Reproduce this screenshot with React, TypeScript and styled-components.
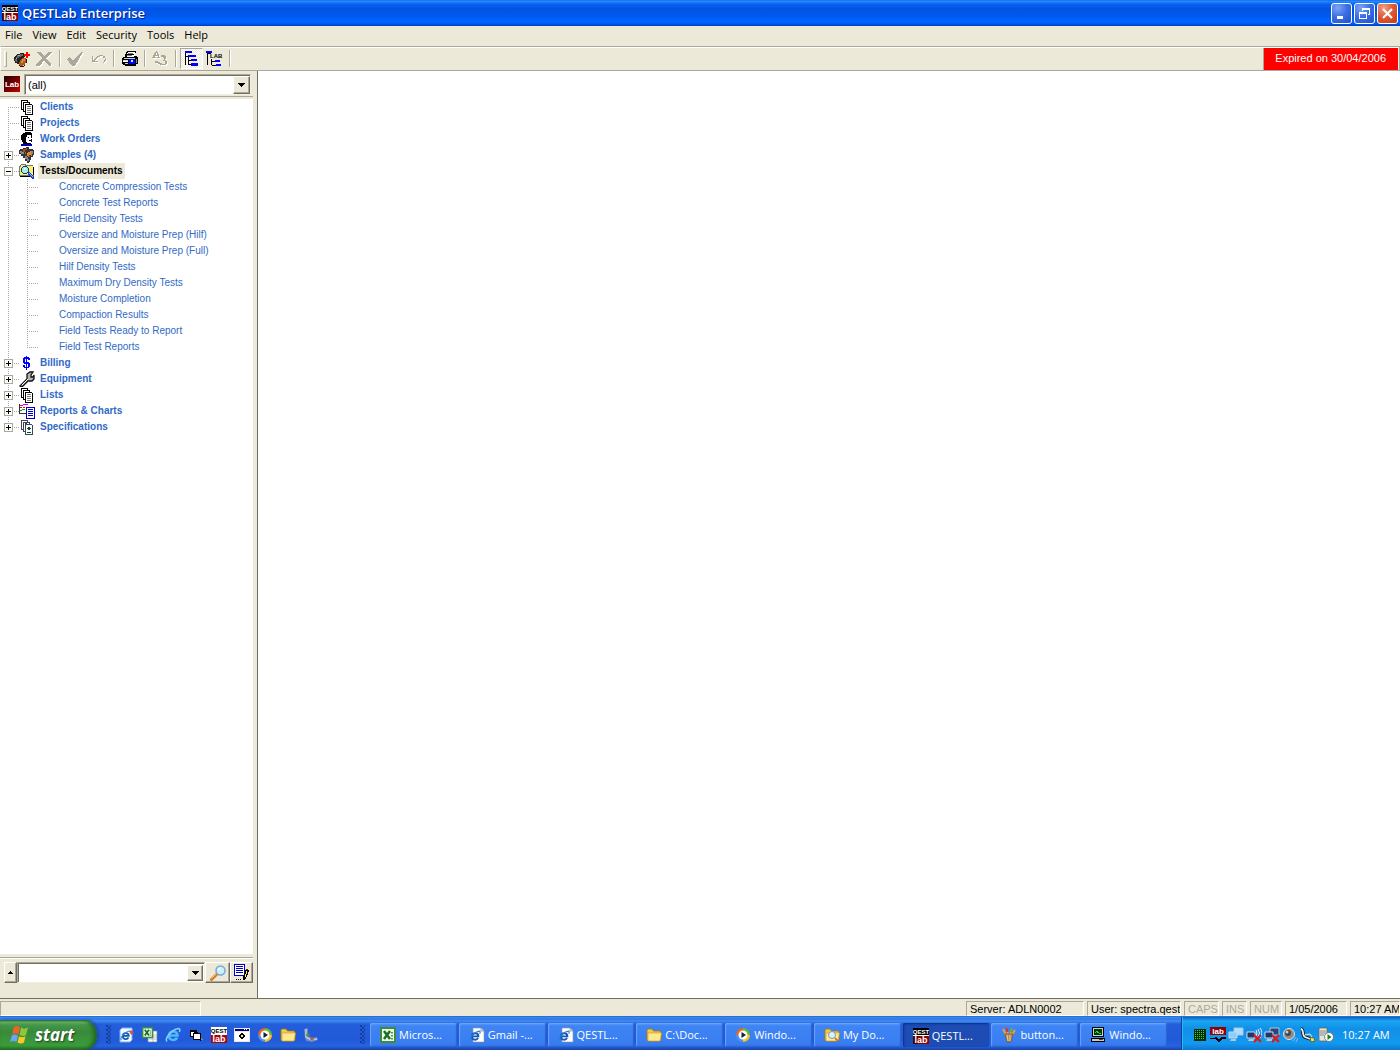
import React from 'react';
import styled, { createGlobalStyle, css } from 'styled-components';

const face = '#ece9d8';
const shade = '#aca899';
const dark = '#716f64';
const ui = '"Open Sans", "Noto Sans", sans-serif';
const arial = '"Liberation Sans", Arial, sans-serif';

const GlobalStyle = createGlobalStyle`
  * { box-sizing: border-box; }
  body { margin: 0; background: #fff; }
  button, input, select { font: inherit; color: inherit; margin: 0; padding: 0; border: 0; border-radius: 0; }
  svg { display: block; flex: none; }
`;

/* ---------- window frame ---------- */

const Desktop = styled.div`
  display: flex;
  flex-direction: column;
  height: 100vh;
  overflow: hidden;
  background: ${face};
  color: #000;
  font: 11px/16px ${ui};
`;

const TitleBar = styled.header`
  display: flex;
  align-items: center;
  gap: 4px;
  height: 26px;
  flex: none;
  padding: 0 2px;
  background: linear-gradient(#0a5fe0 0, #2a90ff 1px, #0a62f2 4px, #0054e3 9px, #0058ee 16px, #0066ff 21px, #0062f8 23px, #003dc2 26px);
`;

const Title = styled.h1`
  flex: 1;
  margin: 0;
  color: #fff;
  font: 600 13px/20px ${ui};
  text-shadow: 1px 1px 1px #0a1883;
`;

const WindowButtons = styled.div`
  display: flex;
  gap: 2px;
`;

const WindowButton = styled.button<{ $close?: boolean }>`
  display: grid;
  place-items: center;
  width: 21px;
  height: 21px;
  border: 1px solid #fff;
  border-radius: 3px;
  background: ${p => p.$close
    ? 'radial-gradient(circle at 30% 20%, #f0a088, #e05a34 45%, #c43a14)'
    : 'radial-gradient(circle at 30% 20%, #7ea6f4, #3d70e4 45%, #1f4fcf)'};
`;

const MenuBar = styled.nav`
  display: flex;
  align-items: center;
  gap: 10px;
  height: 20px;
  flex: none;
  padding: 0 5px 2px;
`;

const MenuItem = styled.button`
  background: none;
  line-height: 16px;
`;

const Toolbar = styled.div`
  display: flex;
  align-items: stretch;
  height: 25px;
  flex: none;
  border: 1px solid ${shade};
  border-left-color: #fff;
  box-shadow: inset 0 1px #fff;
`;

const Grip = styled.span`
  width: 3px;
  margin: 4px 3px 3px;
  border: 1px solid #fff;
  border-right-color: ${shade};
  border-bottom-color: ${shade};
`;

const ToolButton = styled.button<{ $pressed?: boolean }>`
  display: grid;
  place-items: center;
  width: 23px;
  margin: 1px 0;
  background: none;
  ${p => p.$pressed && css`
    background: repeating-conic-gradient(#fff 0 25%, ${face} 0 50%) 0 0 / 2px 2px;
    border: 1px solid #fff;
    border-top-color: ${shade};
    border-left-color: ${shade};
  `}
`;

const Separator = styled.span`
  width: 2px;
  margin: 3px;
  border-left: 1px solid ${shade};
  border-right: 1px solid #fff;
`;

const Spacer = styled.span`
  flex: 1;
`;

const Expired = styled.output`
  padding: 0 12px 0 11px;
  margin: 1px 1px 0 0;
  border-left: 1px solid ${shade};
  background: #f00;
  color: #fff;
  font: 11px/20px ${arial};
`;

/* ---------- navigator ---------- */

const Workspace = styled.div`
  display: flex;
  flex: 1;
  min-height: 0;
  border-bottom: 1px solid ${dark};
`;

const Sidebar = styled.aside`
  display: flex;
  flex-direction: column;
  flex: none;
  width: 258px;
  padding-right: 4px;
  border-right: 1px solid ${dark};
`;

const Document = styled.main`
  flex: 1;
  background: #fff;
`;

const FilterRow = styled.div`
  display: flex;
  align-items: center;
  gap: 4px;
  height: 26px;
  flex: none;
  padding: 1px 2px 0 4px;
  border-bottom: 1px solid ${shade};
`;

const sunken = css`
  border: 1px solid #f1efe2;
  border-top-color: ${shade};
  border-left-color: ${shade};
  box-shadow: inset 1px 1px ${dark};
  background: #fff;
`;

const raised = css`
  border: 1px solid ${dark};
  border-top-color: #fff;
  border-left-color: #fff;
  box-shadow: inset -1px -1px ${shade};
  background: ${face};
`;

const Combo = styled.div`
  ${sunken}
  position: relative;
  display: flex;
  flex: 1;
  min-width: 0;
  height: 21px;
  padding: 2px 1px 1px 2px;
  font: 11px/16px ${arial};
`;

const ComboSelect = styled.select`
  appearance: none;
  flex: 1;
  padding: 0 1px;
  background: #fff;
  outline: 0;
`;

const ComboInput = styled.input`
  flex: 1;
  min-width: 0;
  background: #fff;
  outline: 0;
`;

const DropArrow = styled.span`
  ${raised}
  position: absolute;
  top: 1px;
  right: 0;
  bottom: 0;
  width: 17px;
  display: grid;
  place-items: center;
  pointer-events: none;
`;

const DropButton = styled.button`
  ${raised}
  display: grid;
  place-items: center;
  width: 16px;
`;

const SmallButton = styled.button<{ $width: number }>`
  ${raised}
  display: grid;
  place-items: center;
  width: ${p => p.$width}px;
  height: 21px;
`;

const TreePane = styled.div`
  flex: 1;
  min-height: 0;
  overflow: hidden;
  margin-top: 2px;
  background: #fff;
`;

const SearchRow = styled.form`
  display: flex;
  align-items: center;
  height: 41px;
  flex: none;
  margin-top: 3px;
  padding: 4px 0 15px 4px;
  border-top: 1px solid ${shade};
  box-shadow: inset 0 1px #fff;
`;

const List = styled.ul`
  margin: 0;
  padding: 0;
  list-style: none;
`;

const dotsX = 'repeating-linear-gradient(90deg, #aca899 0 1px, transparent 1px 2px)';
const dotsY = 'repeating-linear-gradient(#aca899 0 1px, transparent 1px 2px)';

const TreeRow = styled.div`
  display: flex;
  align-items: center;
  height: 16px;
`;

const Branch = styled.span<{ $edge?: 'first' | 'last'; $arm?: boolean }>`
  display: flex;
  align-items: center;
  flex: none;
  width: 19px;
  height: 16px;
  padding: 1px 0 0 4px;
  background:
    ${p => p.$arm === false ? '' : `${dotsX} 8px 8px / 11px 1px no-repeat,`}
    ${dotsY} 8px ${p => p.$edge === 'first' ? '8px' : '0'} / 1px ${p => p.$edge ? '8px' : '16px'} no-repeat;
`;

const Expander = styled.button`
  display: grid;
  place-items: center;
  width: 9px;
  height: 9px;
  border: 1px solid ${shade};
  background: #fff;
`;

const IconCell = styled.span`
  flex: none;
  width: 19px;
  height: 16px;
`;

const NodeLink = styled.a<{ $active?: boolean; $leaf?: boolean }>`
  margin-left: ${p => p.$leaf ? 19 : 0}px;
  padding: 0 2px;
  color: ${p => p.$active ? '#000' : '#316ac5'};
  background: ${p => p.$active ? face : 'transparent'};
  font: ${p => p.$leaf ? 'normal' : 'bold'} 10px/16px ${arial};
  text-decoration: none;
  white-space: nowrap;
`;

/* ---------- status bar ---------- */

const StatusBar = styled.footer`
  display: flex;
  gap: 3px;
  height: 17px;
  flex: none;
  padding: 2px 0 0;
  font: 11px/14px ${arial};
`;

const StatusPanel = styled.span<{ $width: number; $off?: boolean }>`
  flex: none;
  width: ${p => p.$width}px;
  padding-left: 3px;
  overflow: hidden;
  white-space: nowrap;
  color: ${p => p.$off ? shade : '#000'};
  border: 1px solid #fff;
  border-top-color: ${shade};
  border-left-color: ${shade};
`;

/* ---------- taskbar ---------- */

const Taskbar = styled.div`
  display: flex;
  align-items: stretch;
  height: 34px;
  flex: none;
  color: #fff;
  background: linear-gradient(#1f50b8 0, #3c8cf0 1px, #2f78e8 3px, #3f8cf0 5px, #245edb 8px, #2259d8 24px, #2464e0 30px, #1941a5 34px);
`;

const StartButton = styled.button`
  display: flex;
  align-items: center;
  gap: 5px;
  width: 97px;
  margin-top: 4px;
  padding: 0 0 1px 10px;
  border-radius: 0 12px 12px 0 / 0 15px 15px 0;
  background: linear-gradient(#2d7d2d 0, #6fb86f 2px, #43964a 5px, #388a3a 12px, #3b983b 22px, #3a9a3a 26px, #256a28 30px);
  box-shadow: inset -3px 0 4px #1f6322, 2px 0 3px #1b4bb4;
  font: italic bold 17px/24px ${ui};
  text-shadow: 1px 1px 2px #1c451c;
`;

const TaskGrip = styled.span<{ $left: number }>`
  flex: none;
  width: 5px;
  margin: 9px 0 6px ${p => p.$left}px;
  background:
    linear-gradient(#153f9e 0 0) 0 0 / 0 0 no-repeat,
    repeating-conic-gradient(transparent 0 25%, #153f9e 0 50%) 0 0 / 4px 4px;
`;

const QuickLaunch = styled.div`
  display: flex;
  align-items: center;
  gap: 7px;
  margin-left: 8px;
  padding-top: 4px;
`;

const IconButton = styled.button`
  display: grid;
  width: 16px;
  height: 16px;
  background: none;
`;

const Tasks = styled.div`
  display: flex;
  flex: 1;
  gap: 2px;
  min-width: 0;
  margin: 7px 14px 3px 5px;
`;

const Task = styled.button<{ $active?: boolean }>`
  display: flex;
  align-items: center;
  gap: 3px;
  flex: 1 1 0;
  min-width: 0;
  padding: ${p => p.$active ? '2px 0 0 10px' : '0 0 0 10px'};
  border-radius: 2px;
  font: 11px/16px ${ui};
  white-space: nowrap;
  background: ${p => p.$active
    ? '#1c4cb4'
    : 'linear-gradient(#5c9cf8 0, #3f84f4 3px, #3a7ff2 18px, #3577ea 24px)'};
  box-shadow: ${p => p.$active ? 'inset 1px 1px 2px #0e2f80' : 'inset -1px -1px 1px #2c62d0, inset 1px 1px 1px #6aa4fa'};
`;

const Tray = styled.div`
  display: flex;
  align-items: center;
  gap: 2px;
  flex: none;
  width: 219px;
  margin-top: 1px;
  padding: 3px 0 0 10px;
  border-left: 1px solid #0b3f9f;
  box-shadow: inset 1px 0 #2bb8f8;
  background: linear-gradient(#0c62c0 0, #1da4f2 4px, #16a0ee 6px, #118fe8 12px, #129aee 26px, #0e78d4 33px);
`;

const Clock = styled.time`
  margin-left: 6px;
  white-space: nowrap;
`;

/* ---------- drawings ---------- */

const Svg = ({ w = 16, h = 16, soft, children }: { w?: number; h?: number; soft?: boolean; children: React.ReactNode }) => (
  <svg width={w} height={h} viewBox={`0 0 ${w} ${h}`} shapeRendering={soft ? 'auto' : 'crispEdges'} aria-hidden="true">{children}</svg>
);

const logoText = { fontFamily: 'Liberation Sans', fontWeight: 700 };

const QestLogo = () => (
  <Svg>
    <rect width="16" height="16" fill="#fff" />
    <rect y="8" width="16" height="8" fill="#8e0000" />
    <rect y="8" width="5" height="8" fill="#4a0000" />
    <rect width="16" height="7" fill="#000" />
    <text x="8" y="6" fontSize="6" textAnchor="middle" fill="#fff" {...logoText}>QEST</text>
    <text x="8" y="15" fontSize="9" textAnchor="middle" fill="#fff" {...logoText}>lab</text>
  </Svg>
);

const QestLogoWhite = () => (
  <Svg>
    <rect width="16" height="16" fill="#fff" />
    <rect y="8" width="16" height="8" fill="#b00008" />
    <text x="8" y="6" fontSize="6" textAnchor="middle" fill="#000" {...logoText}>QEST</text>
    <text x="8" y="15" fontSize="9" textAnchor="middle" fill="#fff" {...logoText}>lab</text>
  </Svg>
);

const LabBadge = () => (
  <Svg>
    <defs>
      <linearGradient id="labBadge" x1="0" y1="0" x2="1" y2="1">
        <stop offset="0" stopColor="#200000" /><stop offset="1" stopColor="#c80000" />
      </linearGradient>
    </defs>
    <rect width="16" height="16" fill="url(#labBadge)" />
    <text x="8" y="11" fontSize="8" textAnchor="middle" fill="#fff" {...logoText}>Lab</text>
  </Svg>
);

const Arrow = ({ up }: { up?: boolean }) => up
  ? <Svg w={5} h={3}><path d="M2 0h1v1h1v1h1v1H0V2h1V1h1z" /></Svg>
  : <Svg w={7} h={4}><path d="M0 0h7v1H6v1H5v1H4v1H3V3H2V2H1V1H0z" /></Svg>;

const AddSample = () => (
  <Svg w={17} h={16}>
    <path d="M3 4h1V3h3V2h4v1h1v3h-1v7H4v-1H2v-2H1V6h1V5h1z" fill="#222" />
    <path d="M4 4h3V3h3v2H8v1H6v1H3V6h1zM2 8h2v3H3v-1H2z" fill="#666" />
    <path d="M5 4h2v1H5zM3 7h1v1H3z" fill="#aaa" />
    <path d="M8 8h1V7h4v5h-1v2h-2v1H7v-1H6v-3h1v-2h1z" fill="#a85a1c" />
    <path d="M9 8h3v2h-2v2H8v-2h1z" fill="#e08a34" />
    <path d="M6 14h1v1h4v-1h1v1h-1v1H7v-1H6zM13 8h1v4h-1z" fill="#2a1204" />
    <path d="M13 1h2v2h2v2h-2v2h-2V5h-2V3h2z" fill="#f00" />
  </Svg>
);

const Cross = () => (
  <Svg w={17} h={16}>
    {['#fff', shade].map((c, i) => (
      <path key={c} d="M0 1h4l4 4 5-4h3l-6 6 5 6v2h-2L8 9l-4 6H0v-1l6-7z" fill={c} transform={i ? '' : 'translate(1 1)'} />
    ))}
  </Svg>
);

const Check = () => (
  <Svg w={17} h={16}>
    {['#fff', shade].map((c, i) => (
      <path key={c} d="M0 8l3-2 3 4 8-9h2L8 15H5z" fill={c} transform={i ? '' : 'translate(1 1)'} />
    ))}
  </Svg>
);

const Undo = () => (
  <Svg>
    {['#fff', shade].map((c, i) => (
      <g key={c} transform={i ? '' : 'translate(1 1)'}>
        <path d="M1 5h1v4h2v1h3v1H1z" fill={c} />
        <path d="M3 10V8h1V7h1V6h1V5h2V4h4v1h2v2h1v3h-1v1h-1v1h-1v-1h1V9h1V7h-2V5H9v1H7v1H6v1H5v1H4v1z" fill={c} />
      </g>
    ))}
  </Svg>
);

const Printer = () => (
  <Svg w={18} h={17}>
    <path d="M6 1h9v2h-1v3h2v1h1v7h-2v2H4v-1H2v-1H1V8h1V7h2V4h1V2h1z" />
    <path d="M7 2h7v1H7zM6 4h7v1H6v2h7V6h1V3H6z" fill="#fff" />
    <path d="M7 3h5v1H7zM6 5h5v1H6z" fill="#777" />
    <path d="M3 8h11v1H3zM2 10h5v1H2zM4 13h3v1H4z" fill="#d0d0d0" />
    <path d="M2 11h5v1H2z" fill="#fff" />
    <path d="M8 9h6v5H8z" fill="#00f" />
    <path d="M10 10h2v2h-2z" fill="#9ff" />
    <path d="M15 9h1v4h-1z" fill="#888" />
  </Svg>
);

const Spelling = () => (
  <Svg w={17} h={16}>
    {['#fff', shade].map((c, i) => (
      <g key={c} transform={i ? '' : 'translate(1 1)'} fill={c}>
        <path d="M4 0h1v1h1v2h1v3h1v1H5V6h1V5H3v1h1v1H0V6h1V4h1V2h1V1h1zM4 2v2h1V2z" fillRule="evenodd" />
        <path d="M9 4h4v1h1v3h-1v1h1v1h1v3h-1v1h-3v-1h2v-3h-2V9h1V7h-1V6H9zM3 10h3v1h2v1h2v1h2v1H8v-1H6v-1H3z" />
      </g>
    ))}
  </Svg>
);

const TreeIcon = ({ lab }: { lab?: boolean }) => (
  <Svg w={17} h={17}>
    {lab
      ? <>
          <path d="M0 1h6v2H0zM9 10h5v2H9zM10 14h5v2h-5z" fill="#00f" />
          <path d="M1 3h1v12H1zM2 3h3v1H2zM5 9h1v6H5zM6 11h3v1H6zM6 15h4v1H6z" />
          <text x="4" y="8" fontSize="6" {...logoText}>LAB</text>
        </>
      : <>
          <path d="M2 1h7v2H2zM5 5h8v2H5zM8 9h6v2H8zM8 13h7v3H8z" fill="#00f" />
          <path d="M2 3h1v12H2zM3 6h2v1H3zM5 7h1v8H5zM6 10h2v1H6zM6 14h2v1H6z" />
        </>}
  </Svg>
);

const Pages = ({ spec }: { spec?: boolean }) => {
  const ink = spec ? '#445' : '#000';
  return (
    <Svg>
      <path d="M2 1h7v10H2z" fill={ink} /><path d="M3 2h5v8H3z" fill="#fff" />
      <path d="M4 3h7v10H4z" fill={ink} /><path d="M5 4h5v8H5z" fill="#fff" />
      <path d="M6 5h7v1h1v10H6z" fill={ink} /><path d="M7 6h6v9H7z" fill="#fff" />
      {spec
        ? <path d="M9 8h2v1h1v1h-1v1H9v-1H8V9h1zM8 13h4v1H8zM4 5h1v3H4zM6 4h2v1H6z" fill="#06503c" />
        : <path d="M8 7h4v1H8zM8 9h4v1H8zM8 11h4v1H8zM8 13h4v1H8z" fill="#777" />}
    </Svg>
  );
};

const Person = () => (
  <Svg>
    <path d="M4 2h2V1h6v1h1v3h-1V4H8v2H7v5h1v2H5v-1H4v-1H3V9H2V4h1V3h1z" />
    <path d="M8 4h4v3h1v1h-1v3h-1v1H8v-1H7V6h1z" fill="#fff" />
    <path d="M9 6h1v1H9zM12 5h1v2h-1zM10 9h2v1h-2zM12 8h1v3h-1zM8 12h4v1H8z" />
    <path d="M2 13h2v-1h2v1h5v-1h1v1h1v2H2z" fill="#0000b0" />
  </Svg>
);

const Samples = () => (
  <Svg>
    <path d="M1 2h3V1h3V0h3v2h4v1h1v5h-1v2h-2v3h-1v2h-1v1H8v-2H6v-3H4V9H2V7H0V3h1z" fill="#333" />
    <path d="M1 4h2v1h2v2H2zM6 9h2v1h1v2H6zM12 4h2v3h-1v2h-1zM8 12h2v2H8z" fill="#888" />
    <path d="M4 2h3V1h1v2H6v2H4z" fill="#b04c10" />
    <path d="M9 5h2V4h1v4h-2v1H8V6h1z" fill="#f08820" />
    <path d="M6 5h1v2H6zM9 9h2v1H9z" fill="#a45a30" />
  </Svg>
);

const TestsFolder = () => (
  <Svg>
    <path d="M2 1h5v1h7v2h1v10H1v-1H0V3h1V2h1z" fill="#777" />
    <path d="M1 4h1V2h4v1h8v9H1z" fill="#f8f070" />
    <path d="M1 13h12v1H1zM14 4h1v8h-1z" fill="#000" />
    <path d="M4 3h4v1h1v1h1v4H9v1H8v1H4v-1H3V9H2V5h1V4h1z" fill="#236" />
    <path d="M4 4h4v1h1v4H8v1H4V9H3V5h1z" fill="#98f0f0" />
    <path d="M5 5h2v1H6v1H5z" fill="#fff" />
    <path d="M9 9h2v1h1v1h1v1h1v1h1v3h-2v-1h-1v-1h-1v-1h-1v-1H9z" fill="#1840d0" />
    <path d="M10 10h1v1h1v1h1v1h1v1h-1v-1h-1v-1h-1v-1h-1z" fill="#8cf" />
  </Svg>
);

const Dollar = () => (
  <Svg>
    <path d="M7 1h1v1h2v1h1v2H9V4H8v3h2v1h1v4h-1v1H8v2H7v-2H5v-1H4v-2h2v2h1V9H5V8H4V3h1V2h2zM6 4v3h1V4zM8 9v3h1V9z" fill="#00f" />
  </Svg>
);

const Wrench = () => (
  <Svg soft>
    <path d="M1 15l7-7V3l3-2h3l-2 3v2h2l1-2v4l-2 2H9l-6 6z" fill="#b4b4b4" stroke="#111" strokeWidth="1.300" />
    <path d="M3 14l6-6" stroke="#fff" />
  </Svg>
);

const Chart = () => (
  <Svg>
    <path d="M0 1h1v9h6v1H0z" fill="#333" />
    <path d="M1 2h3v1H1zM4 1h5v1H4z" fill="#d0d" /><path d="M1 4h2v1H1zM4 4h2v1H4zM7 4h2v1H7z" fill="#f00" /><path d="M1 7h2v1H1zM3 6h3v1H3z" fill="#0a0" />
    <path d="M7 4h9v12H7z" fill="#0000c8" /><path d="M8 5h7v10H8z" fill="#fff" />
    <path d="M9 6h5v1H9zM9 8h5v1H9zM9 10h5v1H9zM9 12h5v1H9z" fill="#0000c8" />
  </Svg>
);

const Magnifier = () => (
  <Svg soft>
    <path d="M1.500 14.500l5-5" stroke="#d87820" strokeWidth="3" strokeLinecap="round" />
    <path d="M1.500 13.500l4.500-4.500" stroke="#ffc060" />
    <circle cx="10.500" cy="5.500" r="4.500" fill="#c8f0ff" stroke="#7ca8d0" strokeWidth="1.500" />
    <path d="M8 5l2-2" stroke="#fff" strokeWidth="1.500" />
  </Svg>
);

const EditList = () => (
  <Svg w={17} h={17}>
    <path d="M1 0h11v12H1z" fill="#0000c8" /><path d="M2 1h9v10H2z" fill="#fff" />
    <path d="M3 2h7v1H3zM3 4h7v1H3zM3 6h7v1H3zM3 8h7v1H3z" fill="#0000c8" />
    <path d="M13 5h2v1h1v2h-1v3h-1v2h-1v2h-1v1h-2v-4h1V9h1V6h1zM3 15h1v1H3zM5 15h1v1H5zM7 15h1v1H7z" />
    <path d="M13 7h1v3h-1v3h-1v-3h1z" fill="#ff0" /><path d="M13 5h2v1h-2z" fill="#a00" />
  </Svg>
);

const WindowsFlag = () => (
  <svg width="20" height="20" viewBox="0 0 20 20" aria-hidden="true">
    <path d="M4 2c2-1.500 4-1.500 6 0L8.500 9.500c-2-1.500-4-1.500-6.500 0z" fill="#f0602c" />
    <path d="M11 2.500c2 1.500 4 1.500 7 0L16 10c-2 1.500-4 1.300-6.500 0z" fill="#8cc83c" />
    <path d="M1.800 10.500c2-1.500 4-1.500 6.200 0L6.500 17c-2-1.500-4-1.500-6.500 0z" fill="#6ca4f8" />
    <path d="M9 11.200c2 1.500 4 1.500 6.500 0L14 17.500c-2 1.500-4 1.300-6.500 0z" fill="#fcc828" />
  </svg>
);

const Ie = ({ page, shortcut }: { page?: boolean; shortcut?: boolean }) => {
  const inner = page || shortcut;
  return (
    <Svg soft>
      {page && <><path d="M4 1h8l3 3v11H4z" fill="#fff" stroke="#999" strokeWidth=".6" /><path d="M12 1v3h3" fill="#ddd" stroke="#777" strokeWidth=".6" /></>}
      {shortcut && <path d="M1 3l2-2h10v12l-2 2H1z" fill="#f4f9ff" stroke="#78b0ec" />}
      <g transform={page ? 'translate(0 3) scale(.75)' : shortcut ? 'translate(1 3) scale(.7)' : ''} fill="none">
        <path d="M4 8.500h8.500C12.500 3 4 3 4 8.500c0 5.500 6.500 5.500 8 2" stroke={inner ? '#1458b8' : '#50b8fc'} strokeWidth="2.500" />
        <path d="M2 14.500C-1 11 8 2 13.500 1.500c2 0 1.500 2 .8 3.500" stroke={inner ? '#2c80d8' : '#7cd0fc'} strokeWidth="1.500" />
      </g>
      {shortcut && <path d="M11 3l4 2.500L12 8z" fill="#e84c10" />}
    </Svg>
  );
};

const Excel = ({ sheet }: { sheet?: boolean }) => (
  <Svg soft>
    {sheet && <><path d="M6 4h9v11H6z" fill="#fff" stroke="#789" strokeWidth=".7" /><path d="M7 8h8M7 10h8M7 12h8M11 5v10" stroke="#9ab" strokeWidth=".7" /></>}
    <g transform={sheet ? 'scale(.7)' : ''}>
      <path d="M1 1h14v14H1z" fill="#f0f8ec" stroke="#3c8c40" strokeWidth="2" />
      <path d="M4 4l6 8M10 4l-6 8" stroke="#187020" strokeWidth="2.500" />
      <path d="M12 5v1.500M12 8v1.500M12 11v1.500" stroke="#4a9a50" strokeWidth="2" />
    </g>
  </Svg>
);

const Folder = ({ find }: { find?: boolean }) => (
  <Svg soft>
    <path d="M1 3l1-1h4l1.500 2H14l1 1v8l-1 1H2l-1-1z" fill="#f4c848" stroke="#a87810" strokeWidth=".8" />
    <path d="M2 6h13.500L14 14H2z" fill="#ffe890" stroke="#c89828" strokeWidth=".6" />
    {find && <><circle cx="8" cy="8" r="3.500" fill="#d8f2ff" stroke="#7c98b8" /><path d="M11 11l3 3" stroke="#c06018" strokeWidth="1.500" /></>}
  </Svg>
);

const Player = () => (
  <Svg soft>
    <path d="M8 8V1a7 7 0 0 0-7 7z" fill="#f06420" /><path d="M8 8V1a7 7 0 0 1 7 7z" fill="#68b838" />
    <path d="M8 8H1a7 7 0 0 0 7 7z" fill="#4c94f0" /><path d="M8 8h7a7 7 0 0 1-7 7z" fill="#fcc020" />
    <circle cx="8" cy="8" r="4.500" fill="#fff" /><path d="M6.500 5l4.500 3-4.500 3z" fill="#123" />
  </Svg>
);

const DesktopIcon = () => (
  <Svg>
    <path d="M2 3h7v2h1v1h3v8h-1v-1H5v-3H2z" /><path d="M3 5h3v1H5v3H3zM6 7h6v5H6z" fill="#fff" /><path d="M13 11h1v1h1v1h-2z" fill="#888" />
  </Svg>
);

const AppWindow = () => (
  <Svg>
    <path d="M0 1h16v14H0z" fill="#e8e8e8" /><path d="M1 2h14v2H1z" fill="#000080" /><path d="M10 2h1v1h-1zM12 2h1v1h-1z" fill="#fff" />
    <path d="M1 5h14v9H1z" fill="#fff" /><path d="M7 6h2v1h1v1h1v2h-1v1H9v1H7v-1H6v-1H5V8h1V7h1z" /><path d="M7 8h2v2H7z" fill="#ff0" />
  </Svg>
);

const Gadget = () => (
  <Svg soft>
    <path d="M1 2l4-1v8l4 2 5-1 1 3-6 2-6-1-1-3z" fill="#6c88c0" />
    <path d="M3 2v8l5 3 6-1" stroke="#b8c8e8" fill="none" strokeWidth="1.500" />
    <circle cx="5" cy="8" r="1.800" fill="#489048" /><circle cx="9" cy="12" r="1.800" fill="#a06850" />
  </Svg>
);

const Brushes = () => (
  <Svg soft>
    <path d="M5 8L2 2M7 8L6 1M9 8l2-7M11 8l3-5" strokeWidth="1.800" stroke="#f0a030" /><path d="M6.500 5L6 1" stroke="#e03020" strokeWidth="2" /><path d="M10 5l1-4" stroke="#50b050" strokeWidth="2" />
    <path d="M4 7h8l-2 8H6z" fill="#b48858" stroke="#6c4820" strokeWidth=".6" /><path d="M6 8l1 6M9 8v6" stroke="#e8d0a8" />
  </Svg>
);

const Terminal = () => (
  <Svg>
    <path d="M2 0h12v10H2zM1 11h14v4H1z" /><path d="M3 1h10v8H3z" fill="#d0d0d0" /><path d="M4 2h8v6H4z" fill="#003800" />
    <path d="M5 5h1V4h2v1h1v1h2v1H9V6H7V5H6v1H5z" fill="#20e840" /><path d="M2 12h12v2H2z" fill="#c8c8c8" /><path d="M9 12h4v1H9z" fill="#444" />
  </Svg>
);

const GreenGrid = () => (
  <Svg>
    <path d="M2 2h12v12H2z" fill="#062c06" />
    {[4, 6, 8, 10, 12].map(y => <path key={y} d={`M3 ${y - 1}h1v1H3zM5 ${y - 1}h1v1H5zM7 ${y - 1}h1v1H7zM9 ${y - 1}h1v1H9zM11 ${y - 1}h1v1h-1z`} fill="#28d838" />)}
  </Svg>
);

const LabPulse = () => (
  <Svg><path d="M0 0h16v8H0z" fill="#900008" /><text x="8" y="7" fontSize="8" textAnchor="middle" fill="#fff" {...logoText}>lab</text><path d="M0 11h4l2-1 3 3 2-3h5v2h-4l-2 3H8l-3-3H0z" /></Svg>
);

const Net = ({ waves, broken }: { waves?: boolean; broken?: boolean }) => (
  <Svg soft>
    {!waves && <path d="M6 1h9v7H6z" fill={broken ? '#284878' : '#a8e0ff'} stroke="#b0c4e0" />}
    <path d="M1 5h8v6H1z" fill={broken ? '#203868' : '#88d0ff'} stroke="#c8d8f0" /><path d="M3 12h5v2H2z" fill="#b8c4d8" />
    {waves && <path d="M10 3q2 3 0 6M12 2q3 4 0 8M14 1q4 5 0 10" stroke="#e8f4ff" fill="none" />}
    {broken && <path d="M8 8l7 7M15 8l-7 7" stroke="#e41818" strokeWidth="2.200" />}
  </Svg>
);

const Speaker = () => (
  <Svg soft><circle cx="7" cy="7" r="5.500" fill="#8c8c8c" stroke="#e0e0e0" /><circle cx="6" cy="6" r="3" fill="#444" /><circle cx="5" cy="5" r="1.500" fill="#ccc" /><path d="M11 14l3-4M14 15l2-4" stroke="#70b0ff" strokeWidth="1.200" /></Svg>
);

const Plug = () => (
  <Svg soft><path d="M1 2c3 0 1 7 4 8l5 2" stroke="#111" strokeWidth="3.500" fill="none" /><path d="M1 2c3 0 1 7 4 8l5 2" stroke="#eee" strokeWidth="1.800" fill="none" /><path d="M5 8l5-1 2 3" stroke="#eee" fill="none" /><path d="M10 10l4 1 1 3-4 1z" fill="#fce030" stroke="#333" strokeWidth=".6" /></Svg>
);

const Server = () => (
  <Svg soft><path d="M1 1h8v13H1z" fill="#e8e4d8" stroke="#666" strokeWidth=".8" /><path d="M2 4h6M2 6h6M2 8h4" stroke="#888" /><circle cx="11" cy="10" r="4.500" fill="#fff" stroke="#666" strokeWidth=".8" /><path d="M9.500 7l4 3-4 3z" fill="#108020" /></Svg>
);

/* ---------- data ---------- */

type Node = { label: string; icon: React.ReactNode; open?: boolean; leaf?: boolean; children?: string[] };

const nodes: Node[] = [
  { label: 'Clients', icon: <Pages />, leaf: true },
  { label: 'Projects', icon: <Pages />, leaf: true },
  { label: 'Work Orders', icon: <Person />, leaf: true },
  { label: 'Samples (4)', icon: <Samples /> },
  {
    label: 'Tests/Documents', icon: <TestsFolder />, open: true,
    children: [
      'Concrete Compression Tests', 'Concrete Test Reports', 'Field Density Tests',
      'Oversize and Moisture Prep (Hilf)', 'Oversize and Moisture Prep (Full)', 'Hilf Density Tests',
      'Maximum Dry Density Tests', 'Moisture Completion', 'Compaction Results',
      'Field Tests Ready to Report', 'Field Test Reports',
    ],
  },
  { label: 'Billing', icon: <Dollar /> },
  { label: 'Equipment', icon: <Wrench /> },
  { label: 'Lists', icon: <Pages /> },
  { label: 'Reports & Charts', icon: <Chart /> },
  { label: 'Specifications', icon: <Pages spec /> },
];

const quickLaunch: [string, React.ReactNode][] = [
  ['Outlook', <Ie shortcut />], ['Excel', <Excel sheet />], ['Internet Explorer', <Ie />],
  ['Show desktop', <DesktopIcon />], ['QESTLab', <QestLogoWhite />], ['Scheduler', <AppWindow />],
  ['Media Player', <Player />], ['Explorer', <Folder />], ['Utilities', <Gadget />],
];

const tasks: [string, React.ReactNode][] = [
  ['Micros...', <Excel />], ['Gmail -...', <Ie page />], ['QESTL...', <Ie page />], ['C:\\Doc...', <Folder />],
  ['Windo...', <Player />], ['My Do...', <Folder find />], ['QESTL...', <QestLogo />],
  ['button...', <Brushes />], ['Windo...', <Terminal />],
];

const TreeNode = ({ node, first, last }: { node: Node; first: boolean; last: boolean }) => (
  <li>
    <TreeRow>
      <Branch $edge={first ? 'first' : last ? 'last' : undefined}>
        {!node.leaf && (
          <Expander type="button" aria-label={`Toggle ${node.label}`}>
            <Svg w={5} h={5}><path d={node.open ? 'M0 2h5v1H0z' : 'M0 2h2V0h1v2h2v1H3v2H2V3H0z'} /></Svg>
          </Expander>
        )}
      </Branch>
      <IconCell>{node.icon}</IconCell>
      <NodeLink href="#" $active={node.open}>{node.label}</NodeLink>
    </TreeRow>
    {node.children && (
      <List>
        {node.children.map((label, i) => (
          <TreeRow as="li" key={label}>
            <Branch $arm={false} />
            <Branch $edge={i === node.children!.length - 1 ? 'last' : undefined} />
            <NodeLink href="#" $leaf>{label}</NodeLink>
          </TreeRow>
        ))}
      </List>
    )}
  </li>
);

export default function App() {
  return (
    <Desktop>
      <GlobalStyle />
      <TitleBar>
        <QestLogo />
        <Title>QESTLab Enterprise</Title>
        <WindowButtons>
          <WindowButton aria-label="Minimize"><Svg w={13} h={13}><path d="M2 9h6v3H2z" fill="#fff" /></Svg></WindowButton>
          <WindowButton aria-label="Restore">
            <Svg w={13} h={13}><path d="M4 1h8v7h-2V7h1V3H5v1H4zM1 5h8v7H1zM2 7v4h6V7z" fill="#fff" fillRule="evenodd" /></Svg>
          </WindowButton>
          <WindowButton $close aria-label="Close">
            <Svg w={13} h={13} soft><path d="M2 2l9 9M11 2l-9 9" stroke="#fff" strokeWidth="2.200" /></Svg>
          </WindowButton>
        </WindowButtons>
      </TitleBar>

      <MenuBar>
        {['File', 'View', 'Edit', 'Security', 'Tools', 'Help'].map(m => <MenuItem key={m}>{m}</MenuItem>)}
      </MenuBar>

      <Toolbar>
        <Grip />
        <ToolButton aria-label="Add"><AddSample /></ToolButton>
        <ToolButton aria-label="Delete"><Cross /></ToolButton>
        <Separator />
        <ToolButton aria-label="Accept"><Check /></ToolButton>
        <ToolButton aria-label="Undo"><Undo /></ToolButton>
        <Separator />
        <ToolButton aria-label="Print"><Printer /></ToolButton>
        <Separator />
        <ToolButton aria-label="Spelling"><Spelling /></ToolButton>
        <Separator />
        <ToolButton aria-label="Show tree" $pressed><TreeIcon /></ToolButton>
        <ToolButton aria-label="Show lab tree"><TreeIcon lab /></ToolButton>
        <Separator />
        <Spacer />
        <Expired>Expired on 30/04/2006</Expired>
      </Toolbar>

      <Workspace>
        <Sidebar>
          <FilterRow>
            <LabBadge />
            <Combo>
              <ComboSelect aria-label="Lab"><option>(all)</option></ComboSelect>
              <DropArrow><Arrow /></DropArrow>
            </Combo>
          </FilterRow>
          <TreePane>
            <List>
              {nodes.map((n, i) => <TreeNode key={n.label} node={n} first={i === 0} last={i === nodes.length - 1} />)}
            </List>
          </TreePane>
          <SearchRow onSubmit={e => e.preventDefault()}>
            <SmallButton $width={13} type="button" aria-label="Expand search"><Arrow up /></SmallButton>
            <Combo>
              <ComboInput aria-label="Search" />
              <DropButton type="button" aria-label="Recent searches"><Arrow /></DropButton>
            </Combo>
            <SmallButton $width={25} aria-label="Find"><Magnifier /></SmallButton>
            <SmallButton $width={23} type="button" aria-label="Edit list"><EditList /></SmallButton>
          </SearchRow>
        </Sidebar>
        <Document />
      </Workspace>

      <StatusBar>
        <StatusPanel $width={201} />
        <Spacer />
        <StatusPanel $width={118}>Server: ADLN0002</StatusPanel>
        <StatusPanel $width={94}>User: spectra.qest</StatusPanel>
        <StatusPanel $width={35} $off>CAPS</StatusPanel>
        <StatusPanel $width={25} $off>INS</StatusPanel>
        <StatusPanel $width={32} $off>NUM</StatusPanel>
        <StatusPanel $width={62}>1/05/2006</StatusPanel>
        <StatusPanel $width={50}>10:27 AM</StatusPanel>
      </StatusBar>

      <Taskbar>
        <StartButton><WindowsFlag />start</StartButton>
        <TaskGrip $left={9} />
        <QuickLaunch>
          {quickLaunch.map(([name, icon]) => <IconButton key={name} aria-label={name}>{icon}</IconButton>)}
        </QuickLaunch>
        <TaskGrip $left={41} />
        <Tasks>
          {tasks.map(([label, icon], i) => <Task key={i} $active={i === 6}>{icon}{label}</Task>)}
        </Tasks>
        <Tray>
          <GreenGrid /><LabPulse /><Net /><Net waves broken /><Net broken /><Speaker /><Plug /><Server />
          <Clock>10:27 AM</Clock>
        </Tray>
      </Taskbar>
    </Desktop>
  );
}
